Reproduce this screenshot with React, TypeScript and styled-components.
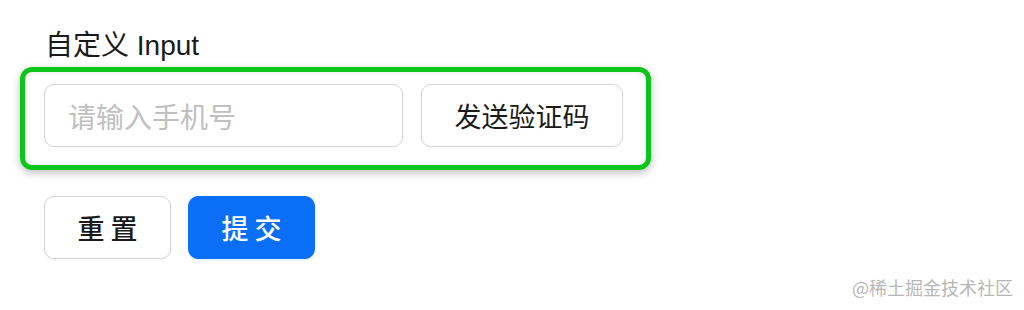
import React from 'react';
import styled, { createGlobalStyle } from 'styled-components';

const GlobalStyle = createGlobalStyle`
  html, body {
    margin: 0;
    padding: 0;
    background: #ffffff;
  }
  body {
    font-family: 'Liberation Sans', 'Noto Sans CJK SC', sans-serif;
    color: #1f1f1f;
  }
`;

const Page = styled.div`
  position: relative;
  width: 1024px;
  height: 310px;
  padding-left: 20px;
  box-sizing: border-box;
  overflow: hidden;
`;

const Label = styled.div`
  margin: 26px 0 1px 25px;
  font-size: 28px;
  line-height: 40px;
  color: #1a1a1a;
`;

const Highlight = styled.div`
  display: inline-flex;
  align-items: center;
  gap: 18px;
  padding: 12px 23px 18px 19px;
  border: 5px solid #0bc61a;
  border-radius: 12px;
  box-shadow:
    0 3px 8px rgba(0, 0, 0, 0.25),
    inset 0 0 6px rgba(0, 0, 0, 0.1);
`;

const PhoneInput = styled.input`
  box-sizing: border-box;
  width: 359px;
  height: 63px;
  padding: 0 23px;
  border: 1.5px solid #d4d4d4;
  border-radius: 10px;
  font-family: 'Noto Sans CJK SC', sans-serif;
  font-size: 28px;
  color: #1f1f1f;
  outline: none;
  &::placeholder {
    color: #c0c0c0;
  }
`;

const Button = styled.button<{ $primary?: boolean; $width: number; $bold?: boolean }>`
  box-sizing: border-box;
  width: ${(p) => p.$width}px;
  height: 63px;
  padding: 0;
  border: 1.5px solid ${(p) => (p.$primary ? '#0a6ef7' : '#d4d4d4')};
  border-radius: 10px;
  background: ${(p) => (p.$primary ? '#0a6ef7' : '#ffffff')};
  color: ${(p) => (p.$primary ? '#ffffff' : '#1a1a1a')};
  font-family: 'Noto Sans CJK SC', sans-serif;
  font-size: 27px;
  font-weight: ${(p) => (p.$bold ? 500 : 400)};
  box-shadow: ${(p) =>
    p.$primary ? '0 2px 0 rgba(5, 145, 255, 0.1)' : '0 2px 0 rgba(0, 0, 0, 0.02)'};
  cursor: pointer;
`;

const Actions = styled.div`
  display: flex;
  gap: 17px;
  margin: 26px 0 0 24px;
`;

const Watermark = styled.div`
  position: absolute;
  right: 11px;
  bottom: 10px;
  font-family: 'Noto Sans CJK SC', sans-serif;
  font-size: 18px;
  color: rgba(150, 150, 150, 0.7);
`;

export default function App() {
  return (
    <Page>
      <GlobalStyle />
      <Label>自定义 Input</Label>
      <Highlight>
        <PhoneInput placeholder="请输入手机号" />
        <Button $width={202}>发送验证码</Button>
      </Highlight>
      <Actions>
        <Button $width={127} $bold>
          重 置
        </Button>
        <Button $primary $bold $width={127}>
          提 交
        </Button>
      </Actions>
      <Watermark>@稀土掘金技术社区</Watermark>
    </Page>
  );
}
